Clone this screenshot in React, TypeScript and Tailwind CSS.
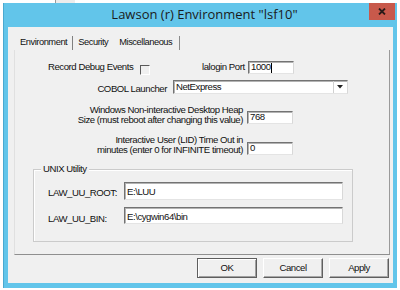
const ui = "font-['Liberation_Sans',Arial,sans-serif] text-[9.6px] tracking-[-0.45px] text-[#111]";

const sunken =
  "bg-white border-t border-l border-b border-r border-t-[#737373] border-l-[#737373] border-b-[#e4e4e4] border-r-[#d8d8d8] shadow-[inset_1px_1px_0_#b3b3b3]";

function Field({ className, children }: { className: string; children?: React.ReactNode }) {
  return <div className={`${sunken} ${className} flex items-center pl-[2px] overflow-hidden`}>{children}</div>;
}

function Button({ label, isDefault }: { label: string; isDefault?: boolean }) {
  return (
    <div
      className={`w-[60px] h-[20px] flex items-center justify-center bg-[#f0f0f0] border ${
        isDefault
          ? "border-[#5e5e5e] shadow-[inset_1px_1px_0_#ffffff,inset_-1px_-1px_0_#a0a0a0]"
          : "border-t-white border-l-white border-b-[#5f5f5f] border-r-[#5f5f5f] shadow-[inset_-1px_-1px_0_#a8a8a8]"
      }`}
    >
      {label}
    </div>
  );
}

export default function App() {
  return (
    <div className={`w-[400px] h-[290px] bg-white overflow-hidden flex flex-col ${ui}`}>
      {/* strip of the window behind */}
      <div className="h-[3px] flex">
        <div className="ml-[55px] w-[20px] h-[3px] border-l border-[#9a9a9a] bg-[#ececec]" />
      </div>

      <div className="ml-[3px] w-[394px] h-[285px] bg-[#62c5ea] border-l border-[#4aa9d0] flex flex-col">
        {/* title bar */}
        <div className="h-[24px] relative flex items-center justify-center pl-[8px]">
          <span className="font-['Open_Sans',sans-serif] text-[13px] tracking-normal text-[#1b1b1b]">
            Lawson (r) Environment "lsf10"
          </span>
          <div className="absolute right-[2px] top-0 w-[26px] h-[17px] bg-[#c8594b] flex items-center justify-center">
            <svg width="8" height="7" viewBox="0 0 8 7">
              <path d="M1 0.5 L7 6.5 M7 0.5 L1 6.5" stroke="#2a1a18" strokeWidth="1.8" />
            </svg>
          </div>
        </div>

        {/* client area */}
        <div className="mx-[4px] h-[256px] bg-[#f0f0f0] flex flex-col">
          {/* tabs */}
          <div className="h-[23px] pt-[8px] pl-[12px] flex items-center text-[9.3px] tracking-[-0.45px]">
            <span>Environment</span>
            <span className="ml-[5px] w-px h-[14px] bg-[#808080]" />
            <span className="ml-[5px]">Security</span>
            <span className="ml-[11px]">Miscellaneous</span>
            <span className="ml-[7px] w-px h-[14px] bg-[#8a8a8a]" />
          </div>

          {/* tab page */}
          <div className="ml-[6px] mr-[3px] h-[205px] border-l border-r border-b border-l-[#e0e0e0] border-r-[#9a9a9a] border-b-[#8f8f8f] flex flex-col">
            <div className="mt-[11px] h-[13px] pl-[33px] flex items-center">
              <span className="w-[92px]">Record Debug Events</span>
              <div className="w-[10px] h-[10px] mt-[5px] border-t border-l border-t-[#5a5a5a] border-l-[#5a5a5a] border-b border-r border-b-white border-r-white" />
              <span className="ml-[52px] w-[46px]">lalogin Port</span>
              <Field className="w-[46px] h-[13px]">
                <span>1000</span>
                <span className="w-px h-[10px] bg-black" />
              </Field>
            </div>

            <div className="mt-[6px] h-[14px] flex items-center">
              <span className="w-[152px] text-right mt-[4px]">COBOL Launcher</span>
              <div className={`${sunken} ml-[6px] w-[175px] h-[14px] flex items-center`}>
                <span className="pl-[2px] flex-1">NetExpress</span>
                <div className="w-[13px] h-[12px] mr-[1px] flex items-center justify-center border-l border-[#d0d0d0]">
                  <svg width="6" height="4" viewBox="0 0 6 4">
                    <path d="M0 0 H6 L3 3.5 Z" fill="#222" />
                  </svg>
                </div>
              </div>
            </div>

            <div className="mt-[11px] flex">
              <div className="w-[228px] text-right leading-[10px]">
                <div>Windows Non-interactive Desktop Heap</div>
                <div>Size (must reboot after changing this value)</div>
              </div>
              <Field className="ml-[4px] w-[46px] h-[13px] self-end mb-[1px]">
                <span>768</span>
              </Field>
            </div>

            <div className="mt-[10px] flex">
              <div className="w-[228px] text-right leading-[10px]">
                <div>Interactive User (LID) Time Out in</div>
                <div>minutes (enter 0 for INFINITE timeout)</div>
              </div>
              <Field className="ml-[4px] w-[46px] h-[13px] self-end">
                <span>0</span>
              </Field>
            </div>

            {/* UNIX Utility group */}
            <div className="relative mt-[14px] ml-[18px] w-[320px] h-[73px] border border-[#cbcbcb] shadow-[inset_1px_1px_0_#ffffff] flex flex-col pl-[14px]">
              <span className="absolute -top-[7px] left-[7px] px-[2px] bg-[#f0f0f0] leading-[12px]">UNIX Utility</span>
              <div className="mt-[12px] flex items-end">
                <span className="w-[76px]">LAW_UU_ROOT:</span>
                <Field className="w-[219px] h-[18px] items-start pt-[2px]">
                  <span>E:\LUU</span>
                </Field>
              </div>
              <div className="mt-[7px] flex items-end">
                <span className="w-[76px] -mb-[2px]">LAW_UU_BIN:</span>
                <Field className="w-[219px] h-[17px] items-start pt-[2px]">
                  <span>E:\cygwin64\bin</span>
                </Field>
              </div>
            </div>
          </div>

          {/* dialog buttons */}
          <div className="mt-[3px] pr-[4px] flex justify-end gap-[6px]">
            <Button label="OK" isDefault />
            <Button label="Cancel" />
            <Button label="Apply" />
          </div>
        </div>
      </div>
    </div>
  );
}
